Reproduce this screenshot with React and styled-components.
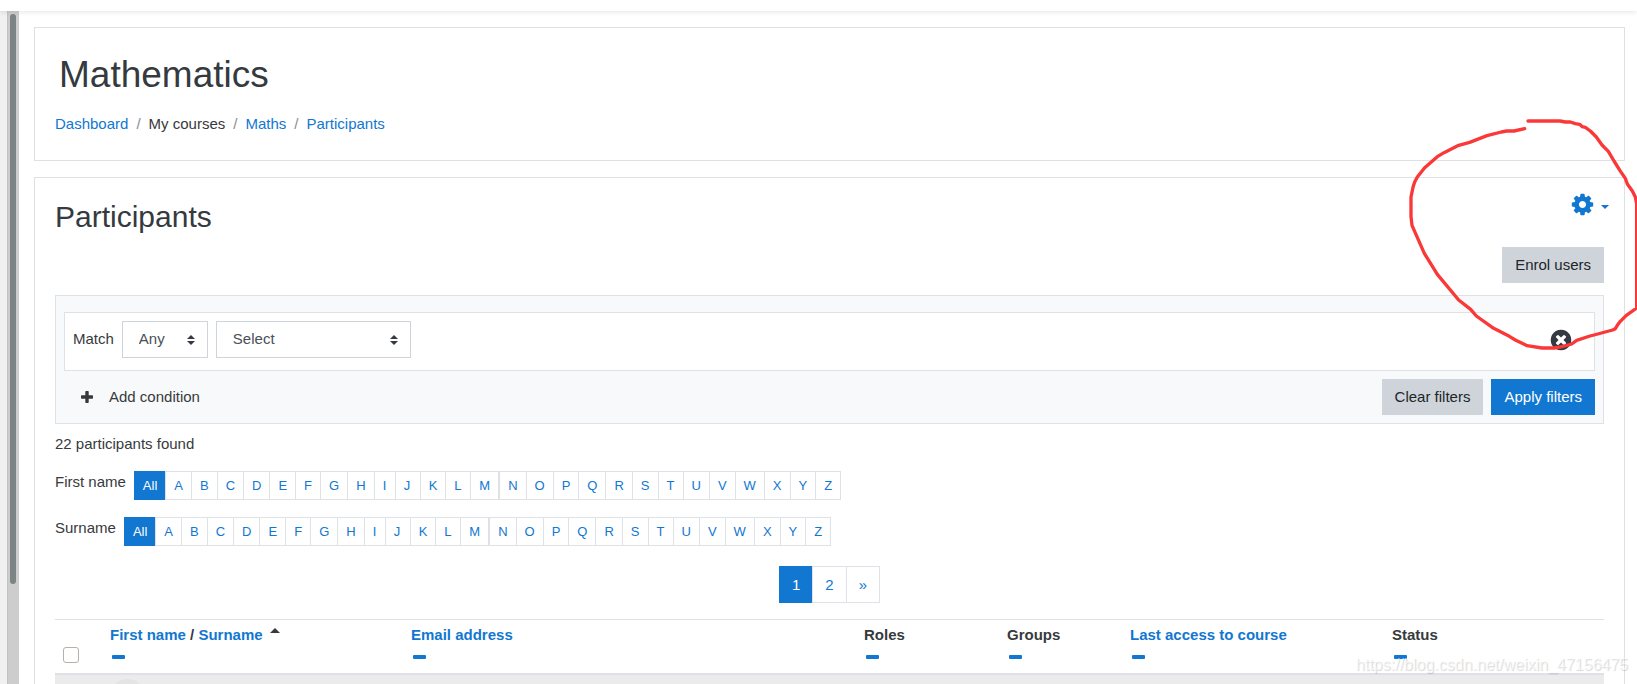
import { useState } from 'react';
import styled, { createGlobalStyle } from 'styled-components';

const firstHalf = 'ABCDEFGHIJKLM'.split('');
const secondHalf = 'NOPQRSTUVWXYZ'.split('');

const columns = [
  { name: 'Email address', link: true },
  { name: 'Roles' },
  { name: 'Groups' },
  { name: 'Last access to course', link: true },
  { name: 'Status' },
];

const InitialsBar = ({ label }) => {
  const [active, setActive] = useState('All');

  const renderLetter = (letter) => (
    <li key={letter}>
      <LetterStyled
        href="#"
        $active={active === letter}
        onClick={(e) => {
          e.preventDefault();
          setActive(letter);
        }}
      >
        {letter}
      </LetterStyled>
    </li>
  );

  return (
    <InitialsStyled aria-label={label}>
      <span>{label}</span>
      <LettersStyled>{['All', ...firstHalf].map(renderLetter)}</LettersStyled>
      <LettersStyled>{secondHalf.map(renderLetter)}</LettersStyled>
    </InitialsStyled>
  );
};

const HideColumn = ({ name }) => (
  <HideStyled type="button" aria-label={`Hide ${name}`}>
    <svg width="13" height="4" viewBox="0 0 13 4">
      <rect width="13" height="4" rx="1" fill="currentColor" />
    </svg>
  </HideStyled>
);

const SelectBox = ({ label, wide, options }) => (
  <SelectStyled $wide={wide}>
    <select aria-label={label}>
      {options.map((option) => (
        <option key={option}>{option}</option>
      ))}
    </select>
    <svg width="8" height="10" viewBox="0 0 8 10">
      <path d="M4 0 8 4H0zM0 6h8L4 10z" fill="#343a40" />
    </svg>
  </SelectStyled>
);

const App = () => {
  return (
    <PageStyled>
      <GlobalStyle />
      <TopBarStyled />
      <BodyStyled>
        <DrawerStyled>
          <ScrollTrackStyled>
            <ScrollThumbStyled />
          </ScrollTrackStyled>
        </DrawerStyled>

        <MainStyled>
          <CourseCardStyled>
            <h1>Mathematics</h1>
            <BreadcrumbStyled aria-label="Breadcrumb">
              <ol>
                <li><a href="#">Dashboard</a></li>
                <li>My courses</li>
                <li><a href="#">Maths</a></li>
                <li><a href="#">Participants</a></li>
              </ol>
            </BreadcrumbStyled>
          </CourseCardStyled>

          <ContentCardStyled>
            <HeadingStyled>
              <h2>Participants</h2>
              <MenuButtonStyled type="button" aria-label="Actions menu">
                <svg width="25" height="25" viewBox="0 0 1792 1792">
                  <path
                    fill="currentColor"
                    d="M1152 896q0-106-75-181t-181-75-181 75-75 181 75 181 181 75 181-75 75-181zm512-109v222q0 12-8 23t-20 13l-185 28q-19 54-39 91 35 50 107 138 10 12 10 25t-9 23q-27 37-99 108t-94 71q-12 0-26-9l-138-108q-44 23-91 38-16 136-29 186-7 28-36 28h-222q-14 0-24.500-8.500t-11.500-21.500l-28-184q-49-16-90-37l-141 107q-10 9-25 9-14 0-25-11-126-114-165-168-7-10-7-23 0-12 8-23 15-21 51-66.500t54-70.500q-27-50-41-99l-183-27q-13-2-21-12.500t-8-23.500v-222q0-12 8-23t19-13l186-28q14-46 39-92-40-57-107-138-10-12-10-24 0-10 9-23 26-36 98.500-107.500t94.500-71.500q13 0 26 10l138 107q44-23 91-38 16-136 29-186 7-28 36-28h222q14 0 24.500 8.500t11.500 21.500l28 184q49 16 90 37l142-107q9-9 24-9 13 0 25 10 129 119 165 170 7 8 7 22 0 12-8 23-15 21-51 66.500t-54 70.500q26 50 41 98l183 28q13 2 21 12.500t8 23.500z"
                  />
                </svg>
                <svg width="8" height="4" viewBox="0 0 8 4">
                  <path d="M0 0h8L4 4z" fill="currentColor" />
                </svg>
              </MenuButtonStyled>
            </HeadingStyled>

            <EnrolStyled>
              <ButtonStyled type="button">Enrol users</ButtonStyled>
            </EnrolStyled>

            <FilterStyled onSubmit={(e) => e.preventDefault()}>
              <ConditionStyled>
                <span>Match</span>
                <SelectBox label="Match" options={['Any', 'All', 'None']} />
                <SelectBox
                  label="Filter type"
                  wide
                  options={['Select', 'Keyword', 'Status', 'Roles', 'Groups']}
                />
                <RemoveStyled type="button" aria-label="Remove filter row">
                  <svg width="24" height="24" viewBox="0 0 1792 1792">
                    <path
                      fill="currentColor"
                      d="M1277 1122q0-26-19-45l-181-181 181-181q19-19 19-45 0-27-19-46l-90-90q-19-19-46-19-26 0-45 19l-181 181-181-181q-19-19-45-19-27 0-46 19l-90 90q-19 19-19 46 0 26 19 45l181 181-181 181q-19 19-19 45 0 27 19 46l90 90q19 19 46 19 26 0 45-19l181-181 181 181q19 19 45 19 27 0 46-19l90-90q19-19 19-46zm387-226q0 209-103 385.500t-279.500 279.500-385.500 103-385.500-103-279.500-279.500-103-385.500 103-385.500 279.500-279.500 385.500-103 385.500 103 279.500 279.500 103 385.500z"
                    />
                  </svg>
                </RemoveStyled>
              </ConditionStyled>
              <FilterActionsStyled>
                <AddConditionStyled type="button">
                  <svg width="12" height="12" viewBox="0 0 12 12">
                    <path
                      d="M5 0h2q.7 0 .7.700v3.600h3.600q.7 0 .7.700v2q0 .7-.7.700H7.700v3.600q0 .7-.7.700H5q-.7 0-.7-.7V7.700H.7Q0 7.700 0 7V5q0-.7.7-.7h3.600V.7Q4.300 0 5 0z"
                      fill="currentColor"
                    />
                  </svg>
                  Add condition
                </AddConditionStyled>
                <ButtonStyled type="button">Clear filters</ButtonStyled>
                <ButtonStyled type="submit" $primary>Apply filters</ButtonStyled>
              </FilterActionsStyled>
            </FilterStyled>

            <CountStyled>22 participants found</CountStyled>

            <InitialsBar label="First name" />
            <InitialsBar label="Surname" />

            <PaginationStyled aria-label="Page">
              <PageLinkStyled href="#" $active>1</PageLinkStyled>
              <PageLinkStyled href="#">2</PageLinkStyled>
              <PageLinkStyled href="#" aria-label="Next page">»</PageLinkStyled>
            </PaginationStyled>

            <TableStyled>
              <colgroup>
                <col width="43" />
                <col width="301" />
                <col width="453" />
                <col width="143" />
                <col width="123" />
                <col width="262" />
                <col width="224" />
              </colgroup>
              <thead>
                <tr>
                  <CheckCellStyled>
                    <input type="checkbox" aria-label="Select all" />
                  </CheckCellStyled>
                  <th scope="col">
                    <a href="#">First name</a> / <a href="#">Surname</a>
                    <SortIconStyled width="10" height="5" viewBox="0 0 10 5">
                      <path d="M5 0 10 5H0z" fill="#343a40" />
                    </SortIconStyled>
                    <HideColumn name="Full name" />
                  </th>
                  {columns.map((column) => (
                    <th scope="col" key={column.name}>
                      {column.link ? <a href="#">{column.name}</a> : column.name}
                      <HideColumn name={column.name} />
                    </th>
                  ))}
                </tr>
              </thead>
              <tbody>
                <tr>
                  <td />
                  <td>
                    <AvatarStyled />
                  </td>
                  <td colSpan="5" />
                </tr>
              </tbody>
            </TableStyled>
          </ContentCardStyled>
        </MainStyled>
      </BodyStyled>

      {/* hand drawn ring around the actions */}
      <MarkerStyled width="247" height="260" viewBox="0 0 741 780">
        <path d="M414 63H510L526 66 541 66 556 71 569 73 577 80 586 82 601 93 619 111 636 135 655 154 672 183 690 212 706 235 712 252 727 273 736 291 740 312V624L709 646 691 664 682 676 676 686 668 690 612 705 600 708 560 721 545 732 516 740 492 744H456L411 737 376 720 358 709 311 685 259 648 242 628 206 600 142 523 103 460 66 376 63 350V291L69 262 74 246 82 231 104 203 142 170 162 158 206 136 239 127 291 107 334 96 350 93H372L404 86" />
      </MarkerStyled>
      <WatermarkStyled>https://blog.csdn.net/weixin_47156475</WatermarkStyled>
    </PageStyled>
  );
};

const GlobalStyle = createGlobalStyle`
  * {
    box-sizing: border-box;
  }

  body {
    margin: 0;
    background-color: #fff;
    color: #373a3c;
    font-family: "Liberation Sans", Arial, sans-serif;
    font-size: 15px;
    line-height: 22px;
  }

  h1, h2, p, ol, ul {
    margin: 0;
    padding: 0;
    font-weight: 400;
  }

  ol, ul {
    list-style: none;
  }

  a {
    color: #1177d1;
    text-decoration: none;
  }

  button, select {
    font: inherit;
    cursor: pointer;
  }

  svg {
    display: block;
  }
`;

const PageStyled = styled.div`
  position: relative;
  display: flex;
  flex-direction: column;
  height: 100vh;
  overflow: hidden;
`;

const TopBarStyled = styled.header`
  flex: 0 0 11px;
  background-color: #fff;
  box-shadow: 0 2px 4px rgb(0 0 0 / 0.08);
  z-index: 1;
`;

const BodyStyled = styled.div`
  display: flex;
  flex: 1;
  min-height: 0;
`;

const DrawerStyled = styled.aside`
  display: flex;
  padding-left: 7px;
  background-color: #f1f1f1;
`;

const ScrollTrackStyled = styled.div`
  width: 12px;
  padding: 3px 3px 0 2px;
  border-left: 1px solid #c4c2c0;
  background-color: #cdcdcd;
`;

const ScrollThumbStyled = styled.div`
  width: 6px;
  height: 85%;
  border-radius: 3px;
  background-color: #7e8483;
`;

const MainStyled = styled.main`
  display: flex;
  flex: 1;
  flex-direction: column;
  gap: 16px;
  min-width: 0;
  padding: 16px 12px 0 15px;
`;

const CardStyled = styled.section`
  flex: none;
  border: 1px solid #dee0e2;
  background-color: #fff;
`;

const CourseCardStyled = styled(CardStyled)`
  padding: 24px 20px 25px;

  h1 {
    margin: 0 0 15px 4px;
    font-size: 37px;
    line-height: 46px;
    color: #343a40;
  }
`;

const BreadcrumbStyled = styled.nav`
  ol {
    display: flex;
  }

  li + li::before {
    content: '/';
    padding: 0 8px;
    color: #868e96;
  }
`;

const ContentCardStyled = styled(CardStyled)`
  padding: 20px;
`;

const HeadingStyled = styled.div`
  display: flex;
  justify-content: space-between;
  align-items: flex-start;

  h2 {
    font-size: 30px;
    line-height: 38px;
    color: #343a40;
  }
`;

const MenuButtonStyled = styled.button`
  display: flex;
  align-items: center;
  gap: 6px;
  margin: -6px -5px 0 0;
  padding: 0;
  border: 0;
  background: none;
  color: #1177d1;

  svg:last-child {
    margin-top: 4px;
  }
`;

const EnrolStyled = styled.div`
  display: flex;
  justify-content: flex-end;
  padding: 11px 0 12px;
`;

const ButtonStyled = styled.button`
  height: 36px;
  padding: 0 13px;
  border: 0;
  background-color: ${({ $primary }) => ($primary ? '#1177d1' : '#ced4da')};
  color: ${({ $primary }) => ($primary ? '#fff' : '#212529')};
`;

const FilterStyled = styled.form`
  padding: 16px 8px 8px;
  border: 1px solid #dee2e6;
  background-color: #f8f9fa;
`;

const ConditionStyled = styled.div`
  display: flex;
  align-items: flex-start;
  gap: 8px;
  margin-bottom: 8px;
  padding: 8px 8px 12px;
  border: 1px solid #dee2e6;
  background-color: #fff;

  span {
    line-height: 36px;
  }
`;

const SelectStyled = styled.div`
  display: grid;
  align-items: center;
  width: ${({ $wide }) => ($wide ? '195px' : '86px')};

  select,
  svg {
    grid-area: 1 / 1;
  }

  select {
    width: 100%;
    height: 37px;
    padding: 0 28px 2px 16px;
    border: 1px solid #ced4da;
    border-radius: 0;
    background-color: #fff;
    color: #495057;
    appearance: none;
  }

  svg {
    justify-self: end;
    margin-right: 13px;
    pointer-events: none;
  }
`;

const RemoveStyled = styled.button`
  margin: 7px 13px 0 auto;
  padding: 0;
  border: 0;
  background: none;
  color: #343a40;
`;

const FilterActionsStyled = styled.div`
  display: flex;
  gap: 8px;
`;

const AddConditionStyled = styled.button`
  display: flex;
  align-items: center;
  gap: 16px;
  margin-right: auto;
  padding: 0 17px;
  border: 0;
  background: none;
  color: #373a3c;
`;

const CountStyled = styled.p`
  padding: 9px 0 16px;
`;

const InitialsStyled = styled.nav`
  display: flex;
  margin-bottom: 17px;

  span {
    margin-right: 8px;
  }
`;

const LettersStyled = styled.ul`
  display: flex;

  li + li {
    margin-left: -1px;
  }
`;

const LetterStyled = styled.a`
  display: block;
  min-width: 26px;
  padding: 4px 8px;
  border: 1px solid ${({ $active }) => ($active ? '#1177d1' : '#dee2e6')};
  background-color: ${({ $active }) => ($active ? '#1177d1' : '#fff')};
  color: ${({ $active }) => ($active ? '#fff' : '#1177d1')};
  font-size: 13px;
  line-height: 19px;

  li:nth-child(10) > & {
    min-width: 22px;
  }
`;

const PaginationStyled = styled.nav`
  display: flex;
  justify-content: center;
  padding: 3px 0 16px;
`;

const PageLinkStyled = styled.a`
  padding: 8px 12px;
  border: 1px solid ${({ $active }) => ($active ? '#1177d1' : '#dee2e6')};
  background-color: ${({ $active }) => ($active ? '#1177d1' : '#fff')};
  color: ${({ $active }) => ($active ? '#fff' : '#1177d1')};
  line-height: 19px;

  & + & {
    margin-left: -1px;
  }
`;

const TableStyled = styled.table`
  width: 100%;
  table-layout: fixed;
  border-spacing: 0;

  th {
    padding: 4px 12px 5px;
    border-top: 1px solid #dee2e6;
    border-bottom: 2px solid #dee2e6;
    text-align: left;
    vertical-align: top;
  }

  td {
    height: 60px;
    padding: 4px 0 0;
    background-color: #ebebeb;
    vertical-align: top;
  }
`;

const CheckCellStyled = styled.th`
  && {
    padding: 27px 8px 10px;
  }

  input {
    display: block;
    width: 16px;
    height: 16px;
    margin: 0;
    border: 1px solid #b8b0a8;
    border-radius: 3px;
    background-color: #fff;
    appearance: none;
  }

  input:checked {
    background-color: #1177d1;
  }
`;

const SortIconStyled = styled.svg`
  display: inline-block;
  margin-left: 7px;
  vertical-align: 7px;
`;

const HideStyled = styled.button`
  display: flex;
  align-items: center;
  height: 22px;
  padding: 0 2px;
  border: 0;
  background: none;
  color: #1177d1;
`;

const AvatarStyled = styled.div`
  width: 35px;
  height: 35px;
  margin-left: 12px;
  border-radius: 50%;
  background-color: #e4e4e4;
`;

const MarkerStyled = styled.svg`
  position: absolute;
  top: 100px;
  right: 0;
  z-index: 2;
  pointer-events: none;

  path {
    fill: none;
    stroke: #fb3838;
    stroke-width: 10;
    stroke-linecap: round;
    stroke-linejoin: round;
  }
`;

const WatermarkStyled = styled.div`
  position: absolute;
  right: 9px;
  bottom: 8px;
  z-index: 2;
  font-size: 16px;
  color: rgb(255 255 255 / 0.6);
  text-shadow: 1px 1px 1px rgb(0 0 0 / 0.16);
  pointer-events: none;
`;

export default App;
